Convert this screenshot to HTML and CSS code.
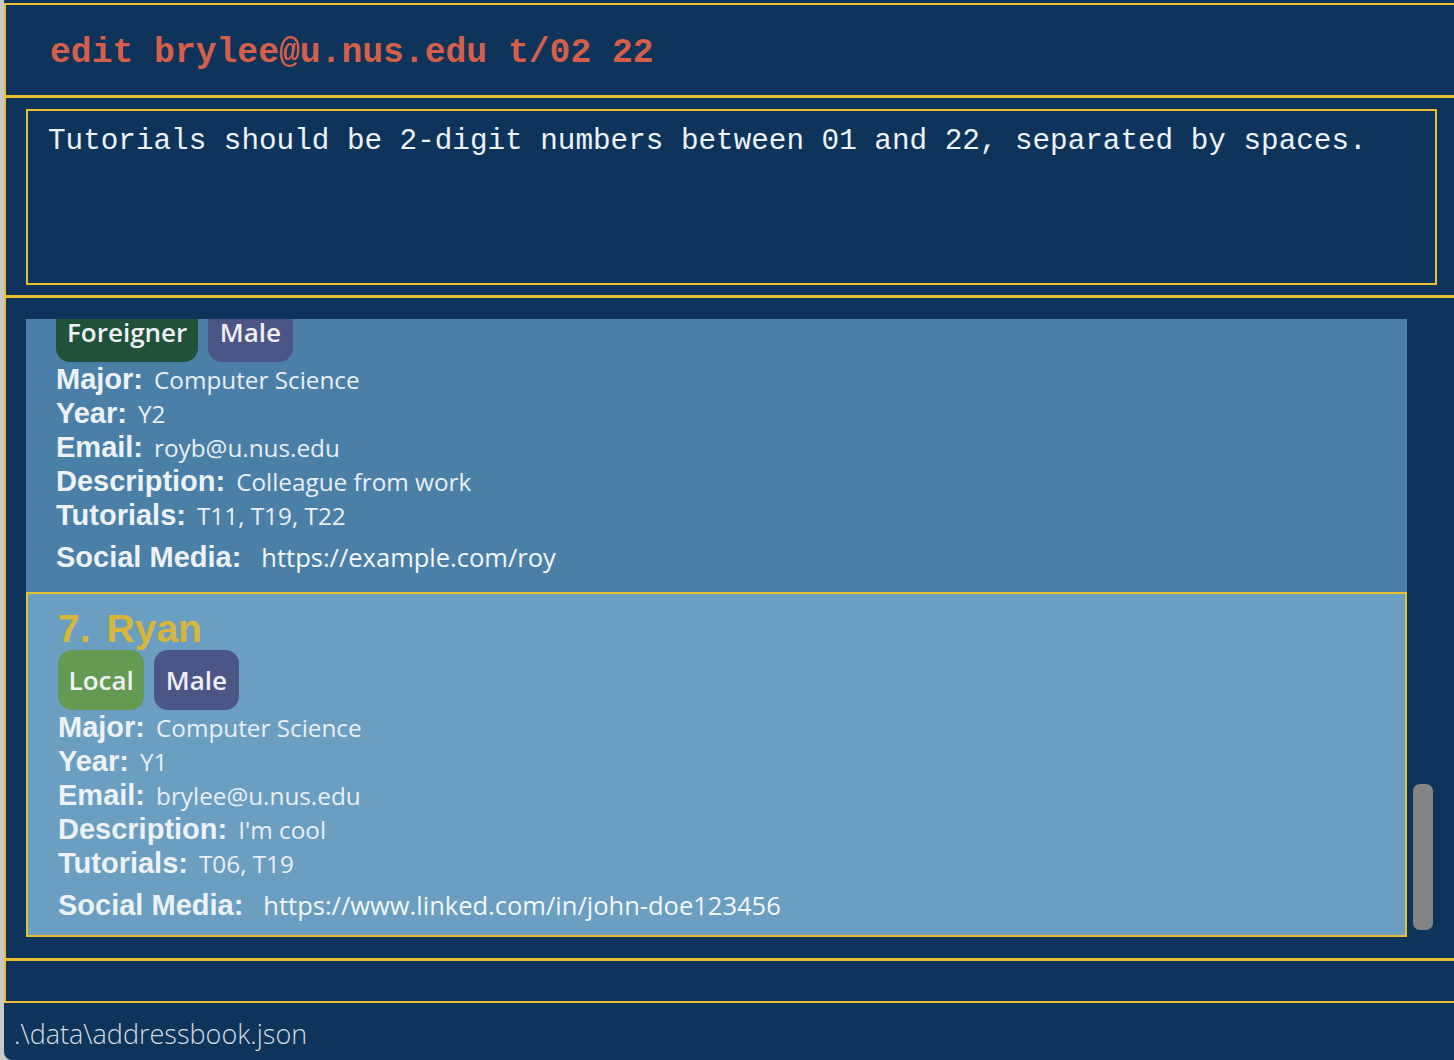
FILE: index.html
```html
<!DOCTYPE html>
<html lang="en">
<head>
<meta charset="utf-8">
<title>Address Book</title>
<link rel="stylesheet" href="styles.css">
</head>
<body>
<div class="app">
  <div class="main">
    <div class="command">edit brylee@u.nus.edu t/02 22</div>
    <div class="result">
      <div class="result-box">Tutorials should be 2-digit numbers between 01 and 22, separated by spaces.</div>
    </div>
    <div class="list">
      <div class="viewport">
        <div class="card scrolled">
          <div class="name-row"><span class="idx">6.</span><span class="name">Roy</span></div>
          <div class="tags"><span class="tag foreigner">Foreigner</span><span class="tag male">Male</span></div>
          <div class="field"><span class="label">Major:</span><span class="value">Computer Science</span></div>
          <div class="field"><span class="label">Year:</span><span class="value">Y2</span></div>
          <div class="field"><span class="label">Email:</span><span class="value">royb@u.nus.edu</span></div>
          <div class="field"><span class="label">Description:</span><span class="value">Colleague from work</span></div>
          <div class="field"><span class="label">Tutorials:</span><span class="value">T11, T19, T22</span></div>
          <div class="field social"><span class="label">Social Media:</span><span class="link">https://example.com/roy</span></div>
        </div>
        <div class="card selected">
          <div class="name-row"><span class="idx">7.</span><span class="name">Ryan</span></div>
          <div class="tags"><span class="tag local">Local</span><span class="tag male">Male</span></div>
          <div class="field"><span class="label">Major:</span><span class="value">Computer Science</span></div>
          <div class="field"><span class="label">Year:</span><span class="value">Y1</span></div>
          <div class="field"><span class="label">Email:</span><span class="value">brylee@u.nus.edu</span></div>
          <div class="field"><span class="label">Description:</span><span class="value">I'm cool</span></div>
          <div class="field"><span class="label">Tutorials:</span><span class="value">T06, T19</span></div>
          <div class="field social"><span class="label">Social Media:</span><span class="link">https://www.linked.com/in/john-doe123456</span></div>
        </div>
      </div>
      <div class="track"><div class="thumb"></div></div>
    </div>
    <div class="spacer"></div>
  </div>
  <div class="status">.\data\addressbook.json</div>
</div>
</body>
</html>
```

FILE: styles.css
```css
* { box-sizing: border-box; }
html, body { margin: 0; padding: 0; }
body {
  background: #c9c9c9;
  padding-left: 4px;
  width: 1454px;
  height: 1060px;
  overflow: hidden;
}
.app {
  height: 1060px;
  background: #0f345b;
  padding-top: 3px;
  display: flex;
  flex-direction: column;
  border-bottom-left-radius: 8px;
}
.main {
  border-top: 2px solid #e9bf30;
  border-left: 2px solid #e9bf30;
  border-bottom: 2px solid #e9bf30;
  display: flex;
  flex-direction: column;
}
.command {
  height: 93px;
  border-bottom: 3px solid #e9bf30;
  padding: 6px 0 0 44px;
  line-height: 84px;
  font-family: "Courier New", "Liberation Mono", monospace;
  font-weight: bold;
  font-size: 34.7px;
  color: #d55f49;
  white-space: pre;
}
.result {
  height: 200px;
  border-bottom: 3px solid #e9bf30;
  padding: 11px 17px 11px 20px;
}
.result-box {
  height: 176px;
  border: 2px solid #e9bf30;
  padding: 14px 20px;
  font-family: "Courier New", "Liberation Mono", monospace;
  font-size: 29.3px;
  color: #eef3fa;
  white-space: pre;
}
.list {
  height: 663px;
  border-bottom: 3px solid #e9bf30;
  padding: 21px 17px 20px 20px;
  display: flex;
}
.viewport {
  width: 1381px;
  height: 619px;
  overflow: hidden;
}
.track {
  width: 30px;
  padding-left: 6px;
}
.thumb {
  width: 20px;
  height: 146px;
  margin-top: 465px;
  background: #848484;
  border-radius: 7px;
}
.card {
  background: #4a80a7;
  padding: 17px 30px 18px 30px;
  color: #eef2f7;
}
.card.scrolled { margin-top: -73px; }
.card.selected {
  background: #6b9fc1;
  border: 2px solid #e9bf30;
  padding-bottom: 13px;
}
.name-row {
  height: 36px;
  line-height: 36px;
  font-family: "Liberation Sans", Arial, sans-serif;
  font-weight: bold;
  font-size: 39px;
  color: #d8b53b;
  white-space: nowrap;
}
.name { margin-left: 16px; }
.tags {
  display: flex;
  gap: 10px;
  margin-top: 3px;
}
.tag {
  height: 60px;
  padding: 0 10.5px;
  border-radius: 14px;
  display: flex;
  align-items: center;
  font-family: "Open Sans", "Noto Sans", sans-serif;
  font-weight: 600;
  font-size: 26px;
  color: #eef0f5;
}
.tag.foreigner { background: #22513a; padding: 0 11px; }
.tag.male { background: #4b5686; padding: 0 11.5px; }
.tag.local { background: #649a52; }
.field {
  height: 34px;
  line-height: 34px;
  display: flex;
  align-items: baseline;
  gap: 11px;
  white-space: nowrap;
}
.label {
  font-family: "Liberation Sans", Arial, sans-serif;
  font-weight: bold;
  font-size: 29px;
  color: #eef2f7;
}
.value {
  font-family: "Open Sans", "Noto Sans", sans-serif;
  font-weight: 400;
  font-size: 24.3px;
  color: #e9eff5;
}
.field.social {
  margin-top: 8px;
  gap: 20px;
}
.link {
  font-family: "Open Sans", "Noto Sans", sans-serif;
  font-weight: 400;
  font-size: 25.5px;
  color: #f4f7fb;
}
.spacer { height: 40px; }
.status {
  flex: 1;
  padding-left: 10px;
  padding-top: 12px;
  font-family: "Open Sans", "Noto Sans", sans-serif;
  font-weight: 300;
  font-size: 27px;
  color: #d4dbe3;
  white-space: pre;
}
```
